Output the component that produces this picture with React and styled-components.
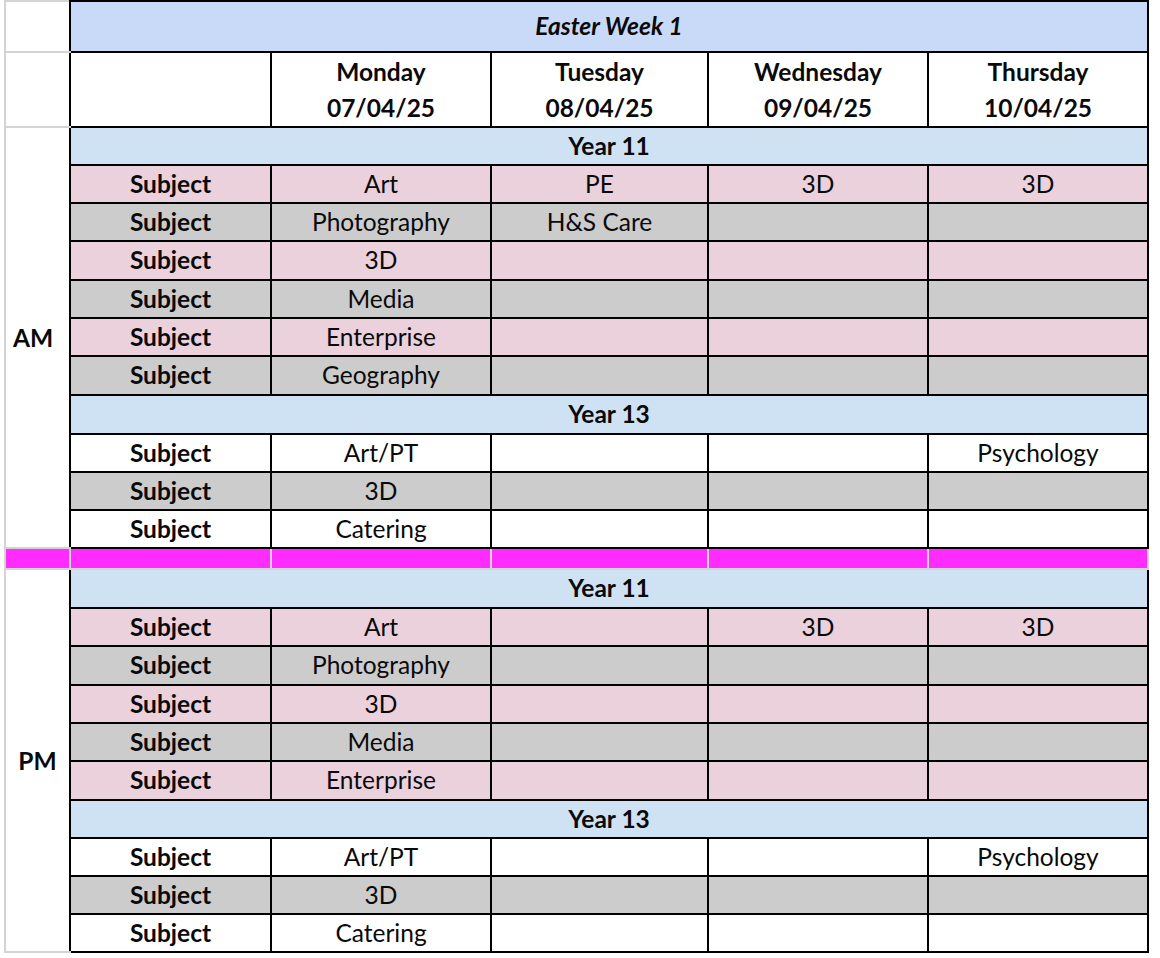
import React from "react";
import styled, { createGlobalStyle } from "styled-components";

const Global = createGlobalStyle`
  html, body { margin: 0; padding: 0; background: #ffffff; }
  body { font-family: Lato, "Liberation Sans", sans-serif; color: #000; }
`;

const Page = styled.div`
  padding: 0 0 0 4px;
`;

const Sheet = styled.table`
  border-collapse: collapse;
  table-layout: fixed;
  width: 1145px;
  font-family: Lato, "Liberation Sans", sans-serif;
  font-size: 24.5px;
  color: #0a0a0a;
`;

const Row = styled.tr`
  height: ${(p) => p.$h}px;
`;

const GRID = "#d3d3d3";
const INK = "#000000";

const Cell = styled.td`
  padding: 0;
  text-align: center;
  vertical-align: middle;
  white-space: nowrap;
  overflow: hidden;
  background: ${(p) => p.$bg || "#ffffff"};
  font-weight: ${(p) => (p.$bold ? 700 : 400)};
  font-style: ${(p) => (p.$italic ? "italic" : "normal")};
  border: 2px solid ${INK};
  line-height: 1.15;
`;

const SideCell = styled.td`
  padding: 0 0 0 ${(p) => (p.$left ? "7px" : "0")};
  text-align: ${(p) => (p.$left ? "left" : "center")};
  vertical-align: middle;
  font-weight: 700;
  background: #ffffff;
  border: 2px solid ${GRID};
  border-right: 2px solid ${INK};
`;

const GapCell = styled.td`
  padding: 0;
  background: #ff2bff;
  border: 2px solid ${GRID};
`;

const DayText = styled.div`
  line-height: 36px;
  font-weight: 700;
`;

const COLORS = {
  blueHead: "#c9daf8",
  blueYear: "#cfe2f3",
  pink: "#ead1dc",
  gray: "#cccccc",
  white: "#ffffff",
};

const days = [
  ["Monday", "07/04/25"],
  ["Tuesday", "08/04/25"],
  ["Wednesday", "09/04/25"],
  ["Thursday", "10/04/25"],
];

const widths = [65, 201, 220, 217, 220, 220];

const amLines = [127, 165, 203, 241, 280, 318, 356, 395, 434, 472, 510, 548];
const pmLines = [569, 608, 646, 685, 723, 761, 800, 838, 876, 914, 952];

const diffs = (arr) => arr.slice(1).map((v, i) => v - arr[i]);

const amSection = [
  { year: "Year 11" },
  { bg: COLORS.pink, v: ["Art", "PE", "3D", "3D"] },
  { bg: COLORS.gray, v: ["Photography", "H&S Care", "", ""] },
  { bg: COLORS.pink, v: ["3D", "", "", ""] },
  { bg: COLORS.gray, v: ["Media", "", "", ""] },
  { bg: COLORS.pink, v: ["Enterprise", "", "", ""] },
  { bg: COLORS.gray, v: ["Geography", "", "", ""] },
  { year: "Year 13" },
  { bg: COLORS.white, v: ["Art/PT", "", "", "Psychology"] },
  { bg: COLORS.gray, v: ["3D", "", "", ""] },
  { bg: COLORS.white, v: ["Catering", "", "", ""] },
];

const pmSection = [
  { year: "Year 11" },
  { bg: COLORS.pink, v: ["Art", "", "3D", "3D"] },
  { bg: COLORS.gray, v: ["Photography", "", "", ""] },
  { bg: COLORS.pink, v: ["3D", "", "", ""] },
  { bg: COLORS.gray, v: ["Media", "", "", ""] },
  { bg: COLORS.pink, v: ["Enterprise", "", "", ""] },
  { year: "Year 13" },
  { bg: COLORS.white, v: ["Art/PT", "", "", "Psychology"] },
  { bg: COLORS.gray, v: ["3D", "", "", ""] },
  { bg: COLORS.white, v: ["Catering", "", "", ""] },
];

function Section({ label, left, rows, heights }) {
  return rows.map((r, i) => (
    <Row key={i} $h={heights[i]}>
      {i === 0 && (
        <SideCell rowSpan={rows.length} $left={left}>
          {label}
        </SideCell>
      )}
      {r.year ? (
        <Cell colSpan={5} $bg={COLORS.blueYear} $bold>
          {r.year}
        </Cell>
      ) : (
        <>
          <Cell $bg={r.bg} $bold>
            Subject
          </Cell>
          {r.v.map((t, j) => (
            <Cell key={j} $bg={r.bg}>
              {t}
            </Cell>
          ))}
        </>
      )}
    </Row>
  ));
}

export default function App() {
  return (
    <Page>
      <Global />
      <Sheet>
        <colgroup>
          {widths.map((w, i) => (
            <col key={i} style={{ width: w }} />
          ))}
        </colgroup>
        <tbody>
          <Row $h={51}>
            <SideCell />
            <Cell colSpan={5} $bg={COLORS.blueHead} $bold $italic>
              Easter Week 1
            </Cell>
          </Row>
          <Row $h={75}>
            <SideCell />
            <Cell />
            {days.map(([d, dt]) => (
              <Cell key={d}>
                <DayText>{d}</DayText>
                <DayText>{dt}</DayText>
              </Cell>
            ))}
          </Row>
          <Section label="AM" left rows={amSection} heights={diffs(amLines)} />
          <Row $h={21}>
            {widths.map((_, i) => (
              <GapCell key={i} />
            ))}
          </Row>
          <Section label="PM" rows={pmSection} heights={diffs(pmLines)} />
        </tbody>
      </Sheet>
    </Page>
  );
}
